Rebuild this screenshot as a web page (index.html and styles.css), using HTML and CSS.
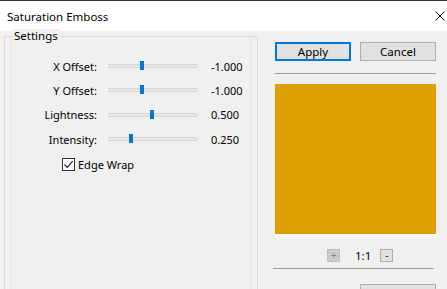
FILE: index.html
```html
<!DOCTYPE html>
<html>
<head>
<meta charset="utf-8">
<link rel="stylesheet" href="styles.css">
</head>
<body>
<div class="window">
  <div class="titlebar">
    <span class="title">Saturation Emboss</span>
    <svg class="close" width="10" height="10" viewBox="0 0 10 10"><path d="M0.5 0.5 L9.5 9.5 M9.5 0.5 L0.5 9.5" stroke="#000" stroke-width="1" fill="none"/></svg>
  </div>
  <div class="main">
    <div class="group">
      <span class="legend">Settings</span>
      <div class="inner">
        <div class="rows">
          <span class="lbl">X Offset:</span>
          <div class="slider"><div class="track"></div><div class="thumb" style="left:32px"></div></div>
          <span class="val">-1.000</span>

          <span class="lbl">Y Offset:</span>
          <div class="slider"><div class="track"></div><div class="thumb" style="left:32px"></div></div>
          <span class="val">-1.000</span>

          <span class="lbl">Lightness:</span>
          <div class="slider"><div class="track"></div><div class="thumb" style="left:42px"></div></div>
          <span class="val">0.500</span>

          <span class="lbl">Intensity:</span>
          <div class="slider"><div class="track"></div><div class="thumb" style="left:21px"></div></div>
          <span class="val">0.250</span>
        </div>
        <label class="check">
          <span class="box"><svg width="11" height="11" viewBox="0 0 11 11"><path d="M1.5 5.5 L4.3 8.3 L9.6 2.2" stroke="#222" stroke-width="1.2" fill="none"/></svg></span>
          <span>Edge Wrap</span>
        </label>
      </div>
    </div>
    <div class="side">
      <div class="btnrow">
        <button class="btn primary">Apply</button>
        <button class="btn">Cancel</button>
      </div>
      <div class="sep"></div>
      <div class="preview"></div>
      <div class="previewbase"></div>
      <div class="zoomrow">
        <span class="zbtn disabled">+</span>
        <span class="ratio">1:1</span>
        <span class="zbtn">-</span>
      </div>
      <div class="sep sep2"></div>
      <div class="btnrow bottom">
        <button class="btn" aria-label="OK"></button>
      </div>
    </div>
  </div>
</div>
</body>
</html>
```

FILE: styles.css
```css
html, body {
  margin: 0;
  padding: 0;
}
body {
  width: 447px;
  height: 289px;
  overflow: hidden;
  background: #f0f0f0;
  font-family: "Noto Sans", "Open Sans", sans-serif;
  font-size: 11px;
  color: #000;
}
.window {
  display: flex;
  flex-direction: column;
  height: 289px;
}
.titlebar {
  height: 30px;
  background: #fff;
  border-top: 1px solid #2e2e2e;
  display: flex;
  align-items: center;
  justify-content: space-between;
  padding: 0 2px 0 7px;
  flex: none;
}
.title {
  font-size: 11.5px;
}
.close {
  display: block;
}
.main {
  display: flex;
  flex: 1;
  min-height: 0;
}
.group {
  position: relative;
  margin: 5px 0 0 4px;
  width: 252px;
  border: 1px solid #dadada;
  border-bottom: none;
  flex: none;
}
.legend {
  position: absolute;
  top: -8px;
  left: 8px;
  padding: 0 2px 0 1px;
  background: #f0f0f0;
  line-height: 14px;
  font-size: 11.5px;
}
.inner {
  margin-left: 6px;
  margin-right: 6px;
  height: 100%;
  border-left: 1px solid #e4e4e4;
  border-right: 1px solid #e4e4e4;
  padding-top: 17px;
}
.rows {
  display: grid;
  grid-template-columns: 85px 11px 89px 14px auto;
  grid-auto-rows: 24.3px;
  align-items: center;
}
.lbl {
  grid-column: 1;
  text-align: right;
}
.slider {
  grid-column: 3;
  position: relative;
  height: 12px;
}
.track {
  position: absolute;
  left: 0;
  right: 0;
  top: 4px;
  height: 2px;
  background: #e7e7e7;
  border: 1px solid #d9d9d9;
}
.thumb {
  position: absolute;
  top: 1px;
  width: 4px;
  height: 9px;
  background: #0078d7;
}
.val {
  grid-column: 5;
}
.check {
  display: flex;
  align-items: center;
  gap: 3px;
  margin: 6px 0 0 50px;
}
.box {
  width: 11px;
  height: 11px;
  border: 1px solid #333;
  background: #fff;
  display: flex;
}
.side {
  margin-left: 17px;
  width: 161px;
  padding-top: 11px;
  display: flex;
  flex-direction: column;
  flex: none;
}
.side > * {
  flex: none;
}
.btnrow {
  display: flex;
  justify-content: space-between;
}
.btn {
  width: 76px;
  height: 19px;
  margin: 0;
  padding: 0;
  border: 1px solid #adadad;
  background: #e1e1e1;
  font-family: inherit;
  font-size: 11.5px;
  color: #000;
  line-height: 15px;
}
.btn.primary {
  border: 2px solid #0078d7;
}
.sep {
  height: 1px;
  background: #a0a0a0;
  margin-top: 12px;
}
.preview {
  margin-top: 10px;
  height: 150px;
  background: #dca000;
}
.previewbase {
  height: 4px;
  background: #fbfbfb;
}
.zoomrow {
  margin-top: 10px;
  display: flex;
  align-items: center;
  height: 14px;
  padding-left: 52px;
}
.zbtn {
  width: 11px;
  height: 11px;
  border: 1px solid #adadad;
  background: #e1e1e1;
  font-size: 10px;
  line-height: 10px;
  text-align: center;
  color: #222;
}
.zbtn.disabled {
  background: #cccccc;
  border-color: #bfbfbf;
  color: #888;
}
.ratio {
  margin: 0 9px 0 15px;
  font-size: 11.5px;
}
.sep2 {
  margin-top: 6px;
  margin-left: -2px;
  margin-right: 2px;
}
.bottom {
  margin-top: 15px;
  justify-content: flex-end;
}
```
